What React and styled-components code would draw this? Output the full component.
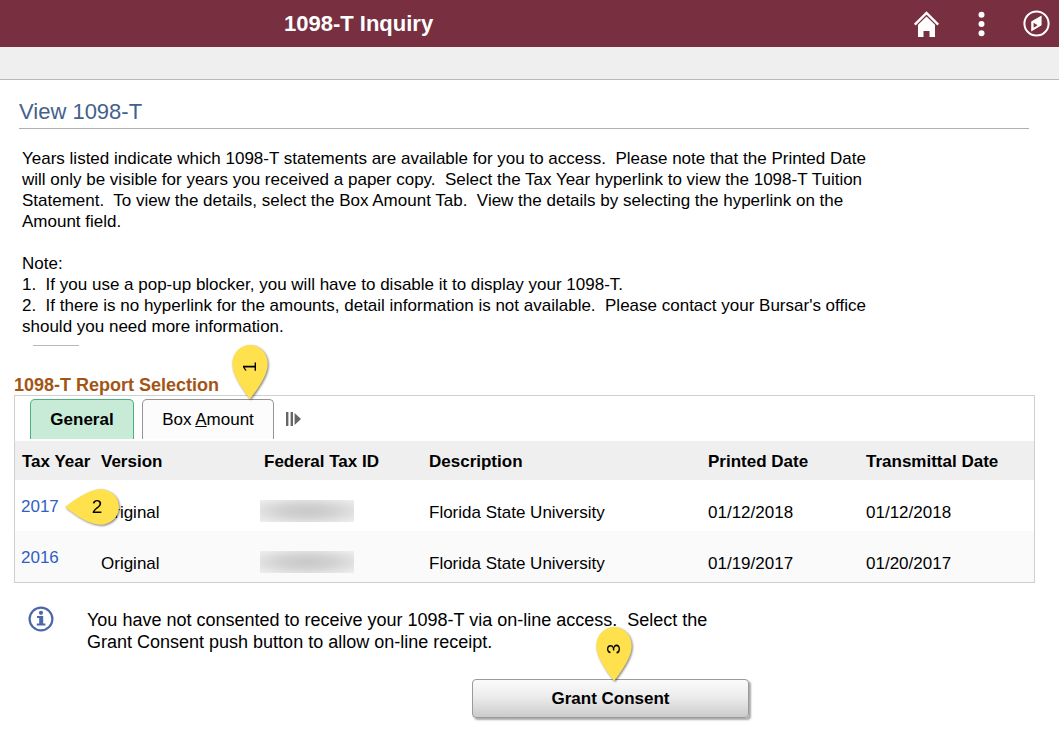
import React from 'react';
import styled, { createGlobalStyle } from 'styled-components';

const GlobalStyle = createGlobalStyle`
        * {
                box-sizing: border-box;
        }
        body {
                margin: 0;
                background-color: #fff;
                color: #000;
                font-family: "Liberation Sans", Arial, sans-serif;
                font-size: 17px;
        }
`

const Header = styled.header`
        display: flex;
        align-items: center;
        height: 47px;
        padding: 0 9px 0 284px;
        background-color: #782f40;
`
const PageTitle = styled.h1`
        flex: 1;
        margin: 0;
        color: #fff;
        font-size: 22px;
        line-height: 26px;
`
const IconBar = styled.nav`
        display: flex;
        align-items: center;
        gap: 28px;
`
const IconButton = styled.button`
        display: flex;
        width: 27px;
        height: 28px;
        padding: 0;
        border: none;
        background: none;
        cursor: pointer;
`
const SubBar = styled.div`
        height: 33px;
        background-color: #efefef;
        border-bottom: 1px solid #b9b9b9;
`
const Content = styled.main`
        padding: 19px 24px 12px 14px;
`
const SectionTitle = styled.h2`
        margin: 0 6px 0 5px;
        padding-bottom: 4px;
        border-bottom: 1px solid #b0b0b0;
        color: #44618c;
        font-size: 22px;
        font-weight: normal;
        line-height: 25px;
`
const Intro = styled.div`
        max-width: 856px;
        margin-top: 19px;
        padding-left: 8px;
        line-height: 21px;
        white-space: pre-wrap;

        p {
                margin: 0 0 21px;
        }
        p:last-child {
                margin: 0;
        }
`
const ShortRule = styled.hr`
        width: 46px;
        height: 1px;
        margin: 8px 0 29px 19px;
        border: none;
        background-color: #b9b9b9;
`
const GroupTitle = styled.h3`
        margin: 0;
        color: #a35515;
        font-size: 18px;
        line-height: 20px;
`
const GridBox = styled.section`
        border: 1px solid #cfcfcf;
`
const TabRow = styled.div`
        display: flex;
        align-items: center;
        gap: 8px;
        height: 45px;
        padding: 3px 15px 2px;
`
const Tab = styled.button`
        position: relative;
        width: ${props => props.$width};
        height: 40px;
        padding: 0;
        border: 1px solid ${props => (props.$active ? '#4caf7d' : '#949494')};
        border-bottom: none;
        border-radius: 5px 5px 0 0;
        background-color: ${props => (props.$active ? '#c8ebd7' : '#fcfcfc')};
        color: #000;
        font-family: inherit;
        font-size: 17px;
        font-weight: ${props => (props.$active ? 'bold' : 'normal')};
        cursor: pointer;
`
const ShowAll = styled.button`
        display: flex;
        margin-left: 3px;
        padding: 0;
        border: none;
        background: none;
        cursor: pointer;
`
const Table = styled.table`
        width: 100%;
        border-collapse: collapse;
        table-layout: fixed;
`
const HeadCell = styled.th`
        width: ${props => props.$width};
        height: 39px;
        padding: 2px 7px 0;
        background-color: #efefef;
        text-align: left;
        white-space: nowrap;
`
const Row = styled.tr`
        height: 51px;
        background-color: ${props => (props.$shaded ? '#fafafa' : '#fff')};
`
const Cell = styled.td`
        padding: 14px 7px 0;
`
const YearCell = styled.td`
        position: relative;
        padding: 2px 6px 0;
`
const YearLink = styled.a`
        color: #2f5fc4;
        text-decoration: none;
`
const Redacted = styled.div`
        width: 94px;
        height: 22px;
        margin: -4px 0 0 -4px;
        background: radial-gradient(ellipse at center, #c9c9c9 0%, #d2d2d2 40%, #efefef 100%);
`
const Notice = styled.div`
        display: flex;
        gap: 33px;
        margin: 23px 0 0 14px;
        font-size: 18px;
        line-height: 22px;

        p {
                max-width: 640px;
                margin: 3px 0 0;
                white-space: pre-wrap;
        }
`
const ConsentRow = styled.div`
        display: flex;
        padding: 26px 0 0 458px;
`
const ConsentButton = styled.button`
        position: relative;
        width: 277px;
        height: 39px;
        padding: 0;
        border: 1px solid #9a9a9a;
        border-radius: 4px;
        background: linear-gradient(#fbfbfb, #ececec 45%, #cbcbcb);
        box-shadow: 2px 2px 2px #aaa;
        color: #000;
        font-family: inherit;
        font-size: 17px;
        font-weight: bold;
        cursor: pointer;
`
const PinSvg = styled.svg`
        position: absolute;
        left: ${props => props.$left};
        top: ${props => props.$top};
        overflow: visible;
        z-index: 1;
        filter: drop-shadow(1px 1px 1px rgba(0, 0, 0, 0.5));
`

const Drop = ({ number }) => (
        <>
                <path d="M0 18C7 12.5 19 4 28 1.4C42-3 54 6 54 18C54 30 42 39 28 34.6C19 32 7 23.5 0 18Z" fill="#ffe14d" />
                <text x="32" y="24" textAnchor="middle" fontSize="19" fontWeight="normal" fill="#000">{number}</text>
        </>
)

const Pin = ({ number, down, left, top }) => (
        <PinSvg $left={left} $top={top} width={down ? 36 : 54} height={down ? 54 : 36}>
                {down ? <g transform="translate(0 54) rotate(-90)"><Drop number={number} /></g> : <Drop number={number} />}
        </PinSvg>
)

const HomeIcon = () => (
        <svg width="27" height="28" viewBox="0 0 27 28">
                <path d="M1.8 14.6L13.5 3L25.2 14.6" fill="none" stroke="#fff" strokeWidth="2.4" />
                <path d="M5 14.8L13.5 6.6L22 14.8V27H16.5V21H10.5V27H5Z" fill="#fff" />
        </svg>
)

const DotsIcon = () => (
        <svg width="27" height="28" viewBox="0 0 27 28" fill="#fff">
                <circle cx="13.5" cy="4.8" r="3" />
                <circle cx="13.5" cy="14" r="3" />
                <circle cx="13.5" cy="23.3" r="3" />
        </svg>
)

const CompassIcon = () => (
        <svg width="27" height="28" viewBox="0 0 27 28">
                <circle cx="13.5" cy="13.5" r="12.1" fill="none" stroke="#fff" strokeWidth="2" />
                <path fill="#fff" fillRule="evenodd" d="M8.2 11.6L18.6 5.4V15.2L8.2 21.4ZM10.6 12.8V17.8L14.6 15.2Z" />
        </svg>
)

const InfoIcon = () => (
        <svg width="26" height="26" viewBox="0 0 26 26">
                <circle cx="13" cy="13" r="11.4" fill="#fff" stroke="#4b68a8" strokeWidth="2.2" />
                <circle cx="13" cy="6.8" r="2.1" fill="#4b68a8" />
                <path fill="#4b68a8" d="M9 10H15.2V17.4H17.4V19.4H8.8V17.4H11.2V12H9Z" />
        </svg>
)

const reports = [
        { year: '2017', version: 'Original', description: 'Florida State University', printed: '01/12/2018', transmitted: '01/12/2018' },
        { year: '2016', version: 'Original', description: 'Florida State University', printed: '01/19/2017', transmitted: '01/20/2017' },
]

const App = () => {
        return (
                <>
                        <GlobalStyle />
                        <Header>
                                <PageTitle>1098-T Inquiry</PageTitle>
                                <IconBar>
                                        <IconButton aria-label="Home"><HomeIcon /></IconButton>
                                        <IconButton aria-label="Actions"><DotsIcon /></IconButton>
                                        <IconButton aria-label="NavBar"><CompassIcon /></IconButton>
                                </IconBar>
                        </Header>
                        <SubBar />
                        <Content>
                                <SectionTitle>View 1098-T</SectionTitle>
                                <Intro>
                                        <p>{'Years listed indicate which 1098-T statements are available for you to access.  Please note that the Printed Date will only be visible for years you received a paper copy.  Select the Tax Year hyperlink to view the 1098-T Tuition Statement.  To view the details, select the Box Amount Tab.  View the details by selecting the hyperlink on the Amount field.'}</p>
                                        <p>{'Note:\n1.  If you use a pop-up blocker, you will have to disable it to display your 1098-T.\n2.  If there is no hyperlink for the amounts, detail information is not available.  Please contact your Bursar\'s office should you need more information.'}</p>
                                </Intro>
                                <ShortRule />
                                <GroupTitle>1098-T Report Selection</GroupTitle>
                                <GridBox>
                                        <TabRow>
                                                <Tab $active $width="104px">General</Tab>
                                                <Tab $width="132px">
                                                        Box <u>A</u>mount
                                                        <Pin number="1" down left="89px" top="-55px" />
                                                </Tab>
                                                <ShowAll aria-label="Show all columns">
                                                        <svg width="17" height="14" viewBox="0 0 17 14" fill="#666">
                                                                <path d="M1 0H3.4V14H1ZM5.6 0H8V14H5.6ZM9.6 1L16 7L9.6 13Z" />
                                                        </svg>
                                                </ShowAll>
                                        </TabRow>
                                        <Table>
                                                <thead>
                                                        <tr>
                                                                <HeadCell $width="79px">Tax Year</HeadCell>
                                                                <HeadCell $width="163px">Version</HeadCell>
                                                                <HeadCell $width="165px">Federal Tax ID</HeadCell>
                                                                <HeadCell $width="279px">Description</HeadCell>
                                                                <HeadCell $width="158px">Printed Date</HeadCell>
                                                                <HeadCell>Transmittal Date</HeadCell>
                                                        </tr>
                                                </thead>
                                                <tbody>
                                                        {reports.map((report, index) => (
                                                                <Row key={report.year} $shaded={index % 2 === 1}>
                                                                        <YearCell>
                                                                                <YearLink href="#">{report.year}</YearLink>
                                                                                {index === 0 && <Pin number="2" left="50px" top="9px" />}
                                                                        </YearCell>
                                                                        <Cell>{report.version}</Cell>
                                                                        <Cell><Redacted /></Cell>
                                                                        <Cell>{report.description}</Cell>
                                                                        <Cell>{report.printed}</Cell>
                                                                        <Cell>{report.transmitted}</Cell>
                                                                </Row>
                                                        ))}
                                                </tbody>
                                        </Table>
                                </GridBox>
                                <Notice>
                                        <InfoIcon />
                                        <p>{'You have not consented to receive your 1098-T via on-line access.  Select the Grant Consent push button to allow on-line receipt.'}</p>
                                </Notice>
                                <ConsentRow>
                                        <ConsentButton>
                                                Grant Consent
                                                <Pin number="3" down left="123px" top="-53px" />
                                        </ConsentButton>
                                </ConsentRow>
                        </Content>
                </>
        )
}

export default App;
